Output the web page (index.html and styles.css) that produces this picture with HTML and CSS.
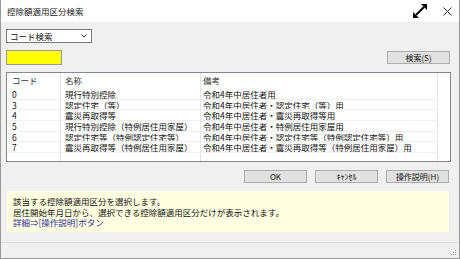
FILE: index.html
```html
<!DOCTYPE html>
<html lang="ja">

<head>
    <meta charset="utf-8">
    <title>控除額適用区分検索</title>
    <link rel="stylesheet" href="styles.css">
</head>

<body>
    <div class="window">
        <div class="titlebar">
            <span class="title">控除額適用区分検索</span>
            <svg class="max-icon" width="16" height="16" viewBox="0 0 16 16">
                <path d="M4 12 L12 4" stroke="#000" stroke-width="2"/>
                <path d="M9 1 H15 V7 Z" fill="#000"/>
                <path d="M1 9 V15 H7 Z" fill="#000"/>
            </svg>
            <svg class="close-icon" width="9" height="9" viewBox="0 0 9 9">
                <path d="M0.5 0.5 L8.5 8.5 M8.5 0.5 L0.5 8.5" stroke="#333" stroke-width="1"/>
            </svg>
        </div>

        <div class="content">
            <div class="select">
                <span>コード検索</span>
                <svg class="chevron" width="6" height="4" viewBox="0 0 6 4">
                    <path d="M0.5 0.5 L3 3 L5.5 0.5" stroke="#444" fill="none" stroke-width="1"/>
                </svg>
            </div>

            <div class="search-row">
                <div class="code-input"></div>
                <button class="btn">検索(S)</button>
            </div>

            <div class="list">
                <div class="row head">
                    <div class="cell">コード</div>
                    <div class="cell">名称</div>
                    <div class="cell">備考</div>
                    <div class="cell last"></div>
                </div>
                <div class="row">
                    <div class="cell">0</div>
                    <div class="cell">現行特別控除</div>
                    <div class="cell">令和4年中居住者用</div>
                    <div class="cell last"></div>
                </div>
                <div class="row">
                    <div class="cell">3</div>
                    <div class="cell">認定住宅（等）</div>
                    <div class="cell">令和4年中居住者・認定住宅（等）用</div>
                    <div class="cell last"></div>
                </div>
                <div class="row">
                    <div class="cell">4</div>
                    <div class="cell">震災再取得等</div>
                    <div class="cell">令和4年中居住者・震災再取得等用</div>
                    <div class="cell last"></div>
                </div>
                <div class="row">
                    <div class="cell">5</div>
                    <div class="cell">現行特別控除（特例居住用家屋）</div>
                    <div class="cell">令和4年中居住者・特例居住用家屋用</div>
                    <div class="cell last"></div>
                </div>
                <div class="row">
                    <div class="cell">6</div>
                    <div class="cell">認定住宅等（特例認定住宅等）</div>
                    <div class="cell">令和4年中居住者・認定住宅等（特例認定住宅等）用</div>
                    <div class="cell last"></div>
                </div>
                <div class="row">
                    <div class="cell">7</div>
                    <div class="cell">震災再取得等（特例居住用家屋）</div>
                    <div class="cell">令和4年中居住者・震災再取得等（特例居住用家屋）用</div>
                    <div class="cell last"></div>
                </div>
                <div class="row filler">
                    <div class="cell"></div>
                    <div class="cell"></div>
                    <div class="cell"></div>
                    <div class="cell last"></div>
                </div>
            </div>

            <div class="actions">
                <button class="btn">OK</button>
                <button class="btn">ｷｬﾝｾﾙ</button>
                <button class="btn">操作説明(H)</button>
            </div>

            <div class="info">
                <p>該当する控除額適用区分を選択します。</p>
                <p>居住開始年月日から、選択できる控除額適用区分だけが表示されます。</p>
                <p class="link">詳細⇒[操作説明]ボタン</p>
            </div>
        </div>

        <div class="statusbar">
            <svg class="grip" width="6" height="6" viewBox="0 0 6 6">
                <rect x="4" y="0" width="1" height="1" fill="#999"/>
                <rect x="2" y="2" width="1" height="1" fill="#999"/>
                <rect x="4" y="2" width="1" height="1" fill="#999"/>
                <rect x="0" y="4" width="1" height="1" fill="#999"/>
                <rect x="2" y="4" width="1" height="1" fill="#999"/>
                <rect x="4" y="4" width="1" height="1" fill="#999"/>
            </svg>
        </div>
    </div>
</body>
</html>
```

FILE: styles.css
```css
* {
    margin: 0;
    padding: 0;
    box-sizing: border-box;
}

body {
    font-family: "Noto Sans CJK JP", "Noto Sans", sans-serif;
    font-size: 8.5px;
    color: #111;
}

.window {
    width: 460px;
    height: 259px;
    border: 1px solid #999;
    border-top: none;
    background: #f0f0f0;
    display: flex;
    flex-direction: column;
}

.titlebar {
    height: 22px;
    background: #fff;
    display: flex;
    align-items: center;
    padding: 0 6px 0 6px;
}

.title {
    flex: 1;
    color: #222;
}

.max-icon {
    margin-right: 15px;
}

.close-icon {
    margin-right: 1px;
}

.content {
    padding: 7px 8px 0 5px;
    display: flex;
    flex-direction: column;
}

.select {
    width: 86px;
    height: 14px;
    background: #fff;
    border: 1px solid #7a7a7a;
    display: flex;
    align-items: center;
    justify-content: space-between;
    padding: 0 4px 0 3px;
}

.search-row {
    margin-top: 7px;
    display: flex;
    align-items: center;
    justify-content: space-between;
}

.code-input {
    width: 56px;
    height: 15px;
    background: #ffff00;
    border: 1px solid #9a9a9a;
}

.btn {
    width: 63px;
    height: 13px;
    background: #e1e1e1;
    border: 1px solid #adadad;
    font-family: inherit;
    font-size: 8px;
    color: #111;
    line-height: 11px;
}

.search-row .btn {
    margin-right: 1px;
}

.list {
    margin-top: 7px;
    height: 90px;
    background: #fff;
    border: 1px solid #828790;
    display: flex;
    flex-direction: column;
    overflow: hidden;
}

.row {
    display: grid;
    grid-template-columns: 54px 140px 237px 1fr;
    height: 10.7px;
    line-height: 10px;
}

.row.head {
    height: 16px;
    line-height: 15px;
    color: #333;
}

.row.filler {
    flex: 1;
}

.cell {
    border-right: 1px solid #e3e3e3;
    border-bottom: 1px solid #f0f0f0;
    padding-left: 4px;
    white-space: nowrap;
    overflow: hidden;
}

.cell:first-child {
    padding-left: 5px;
}

.cell:nth-child(3) {
    padding-left: 2px;
}

.head .cell,
.filler .cell {
    border-bottom: none;
}

.cell.last {
    border: none;
}

.actions {
    margin-top: 8px;
    display: flex;
    justify-content: flex-end;
    gap: 8px;
    padding-right: 2px;
}

.info {
    margin: 8px 2px 0 1px;
    height: 41px;
    background: #ffffe1;
    padding: 5px 6px 0;
    line-height: 10.5px;
}

.info .link {
    color: #2b2b9a;
}

.statusbar {
    flex: 1;
    margin-top: 10px;
    border-top: 1px solid #dadada;
    display: flex;
    align-items: flex-end;
    justify-content: flex-end;
    padding: 0 2px 2px 0;
}
```
